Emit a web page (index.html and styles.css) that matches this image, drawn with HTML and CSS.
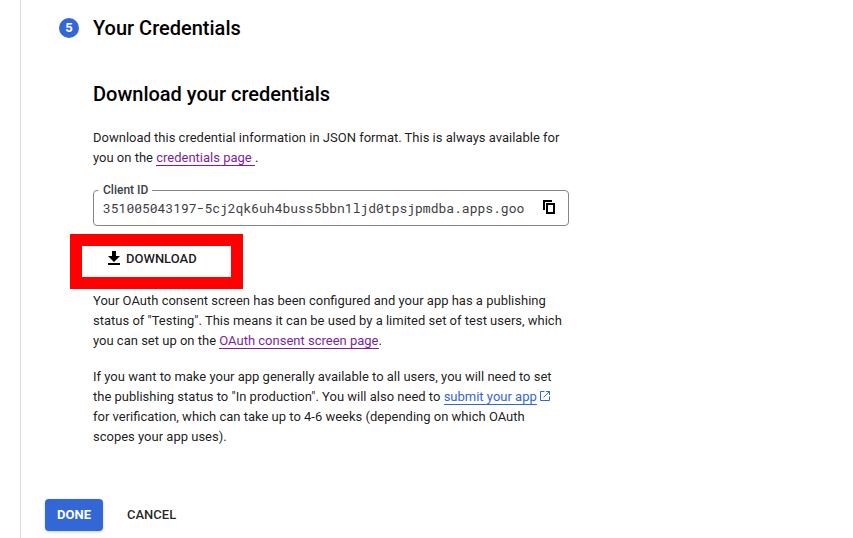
FILE: index.html
```html
<!DOCTYPE html>
<html lang="en">
<head>
<meta charset="utf-8">
<title>Your Credentials</title>
<link rel="stylesheet" href="styles.css">
</head>
<body>
<main class="panel">
  <header class="step">
    <span class="step-number">5</span>
    <h1 class="step-title">Your Credentials</h1>
  </header>
  <section class="content">
    <h2 class="heading">Download your credentials</h2>
    <p class="text">Download this credential information in JSON format. This is always available for<br>you on the <a class="link visited">credentials page&nbsp;</a>.</p>
    <fieldset class="field">
      <legend class="field-label">Client ID</legend>
      <span class="field-value">351005043197-5cj2qk6uh4buss5bbn1ljd0tpsjpmdba.apps.goo</span>
      <svg class="copy-icon" viewBox="0 0 12 14"><path d="M1 10V1h8M4 4h7v9H4z" fill="none" stroke="#000" stroke-width="2"/></svg>
    </fieldset>
    <div class="download">
      <svg class="download-icon" viewBox="0 0 12 14"><path d="M4 0h4v5h4L6 11 0 5h4zM0 12h12v2H0z"/></svg>
      <span>DOWNLOAD</span>
      <div class="highlight"></div>
    </div>
    <p class="text">Your OAuth consent screen has been configured and your app has a publishing<br>status of "Testing". This means it can be used by a limited set of test users, which<br>you can set up on the <a class="link visited">OAuth consent screen page</a>.</p>
    <p class="text">If you want to make your app generally available to all users, you will need to set<br>the publishing status to "In production". You will also need to <a class="link">submit your app</a><svg class="open-icon" viewBox="0 0 10 10"><path d="M4.500.5h-4v9h9v-4M6 .5h3.500V4M9.500.5l-6 6" fill="none" stroke="#3367d6"/></svg><br>for verification, which can take up to 4-6 weeks (depending on which OAuth<br>scopes your app uses).</p>
  </section>
  <footer class="actions">
    <button class="button primary">DONE</button>
    <button class="button">CANCEL</button>
  </footer>
</main>
</body>
</html>
```
FILE: styles.css
```css
* { box-sizing: border-box; }
body {
  margin: 0;
  background: #fff;
  color: rgba(0, 0, 0, 0.9);
  font-family: Roboto, "Liberation Sans", sans-serif;
  font-size: 13px;
}
.panel {
  height: 538px;
  margin-left: 20px;
  padding: 16px 0 0 24px;
  border-left: 1px solid #dadce0;
  overflow: hidden;
}
.step { display: flex; align-items: center; height: 24px; padding-left: 14px; }
.step-number {
  width: 20px;
  height: 20px;
  margin-right: 14px;
  border-radius: 50%;
  background: #3367d6;
  color: #fff;
  font-size: 13px;
  font-weight: 700;
  line-height: 20px;
  text-align: center;
}
.step-title, .heading {
  margin: 0;
  color: #000;
  font-size: 20px;
  font-weight: 500;
  line-height: 24px;
  white-space: nowrap;
}
.content { width: 476px; margin: 42px 0 0 48px; }
.text { margin: 0 0 16px; line-height: 20px; white-space: nowrap; }
.heading + .text { margin: 22px 0 15px; }
.link { border-bottom: 1px solid; color: #3367d6; }
.visited { color: #7b1fa2; }
.open-icon { width: 10px; height: 10px; margin-left: 3px; }
.field {
  display: flex;
  align-items: center;
  justify-content: space-between;
  height: 43px;
  margin: 0;
  padding: 0 13px 7px 9px;
  border: 1px solid #80868b;
  border-radius: 4px;
}
.field-label {
  height: 14px;
  margin-left: -5px;
  padding: 0 4px 0 5px;
  color: #3c4043;
  font-size: 12px;
  font-weight: 500;
  line-height: 14px;
}
.field-value {
  color: #3c4043;
  font-family: "Roboto Mono", "Liberation Mono", monospace;
  font-size: 13px;
  line-height: 18px;
}
.copy-icon { width: 12px; height: 14px; margin-bottom: 2px; }
.download {
  position: relative;
  display: flex;
  align-items: center;
  gap: 6px;
  height: 32px;
  margin: 16px 0 17px;
  padding-left: 15px;
  font-weight: 500;
}
.download-icon { width: 12px; height: 14px; }
.highlight {
  position: absolute;
  top: -8px;
  left: -23px;
  width: 173px;
  height: 55px;
  border: 12px solid #f00;
}
.actions { display: flex; gap: 12px; margin-top: 52px; }
.button {
  height: 32px;
  padding: 0 12px;
  border: 0;
  border-radius: 4px;
  background: none;
  color: rgba(0, 0, 0, 0.87);
  font: 500 13px/32px Roboto, "Liberation Sans", sans-serif;
}
.primary {
  width: 58px;
  background: #3367d6;
  box-shadow: 0 1px 3px rgba(0, 0, 0, 0.2);
  color: #fff;
  font-weight: 700;
}
```
